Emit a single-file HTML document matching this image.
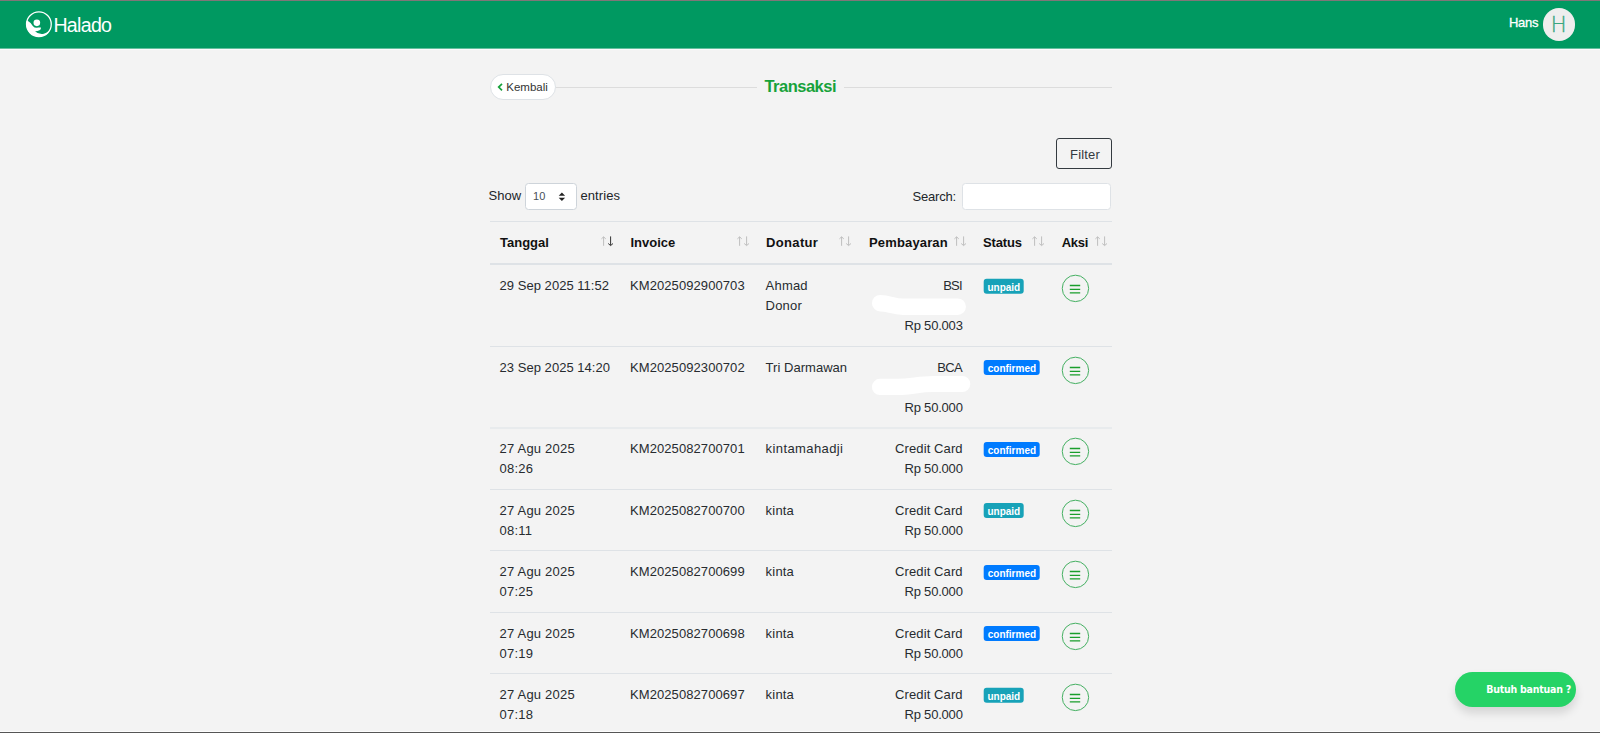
<!DOCTYPE html>
<html lang="id">
<head>
<meta charset="utf-8">
<title>Transaksi</title>
<style>
*{box-sizing:border-box;margin:0;padding:0}
html,body{width:1600px;height:733px;overflow:hidden}
body{position:relative;background:#f3f3f3;font-family:"Liberation Sans",sans-serif;font-size:13px;line-height:20px;color:#212529}
.abs{position:absolute}
#topline{left:0;top:0;width:1600px;height:1px;background:#807678}
#botline{left:0;top:731px;width:1600px;height:2px;background:#555;border-top:1px solid #fdfdfd}
#nav{left:0;top:0;width:1600px;height:48px;background:#009961}
#navedge{left:0;top:48px;width:1600px;height:2px;background:#fcfafc;border-top:1px solid #65c09f}
#brand{left:53.4px;top:12.8px;font-size:19.6px;line-height:24px;color:#fff;letter-spacing:-.7px;white-space:nowrap}
#uname{left:1509px;top:13px;font-size:13px;line-height:20px;color:#fff;letter-spacing:-.3px;-webkit-text-stroke:.3px #fff;white-space:nowrap}
#avatar{left:1542.5px;top:8px;width:32.5px;height:32.5px;border-radius:50%;background:#eee;color:#3aa680;-webkit-text-stroke:.35px #3aa680;padding-top:1px;font-family:"DejaVu Sans Light","DejaVu Sans","Liberation Sans",sans-serif;font-weight:200;font-size:21px;line-height:32.5px;text-align:center}
#back{left:490px;top:74px;width:65.5px;height:25.5px;border:1px solid #dee2e6;border-radius:13px;background:#fff;font-size:11.5px;line-height:23.5px;color:#333;white-space:nowrap}
#back span{position:absolute;left:15.3px;top:0.5px}
#hr1{left:556px;top:87px;width:201px;height:1px;background:#dcdcdc}
#hr2{left:844px;top:87px;width:267.5px;height:1px;background:#dcdcdc}
#title{left:756.5px;top:74px;width:87px;text-align:center;font-weight:bold;font-size:16.5px;letter-spacing:-.5px;line-height:24px;color:#17a23b;white-space:nowrap;padding-left:.5px}
#filter{left:1056px;top:138px;width:55.5px;height:31px;border:1px solid #343a40;border-radius:3px;text-align:center;line-height:31.4px;color:#343a40;padding-left:2.5px;letter-spacing:.15px}
.lbl{white-space:nowrap;line-height:20px}
#sel{left:525.4px;top:183px;width:51.2px;height:27px;border:1px solid #ced4da;border-radius:3.5px;background:#fff;font-size:11px;line-height:25.6px;color:#495057;padding-left:6.7px}
#srch{left:962.4px;top:183px;width:149px;height:27px;border:1px solid #dee2e6;border-radius:3.5px;background:#fff}
#tbl{left:490px;top:0;width:621.5px}
.hl{position:absolute;left:0;width:621.5px;height:1px;background:#dee2e6}
.th{position:absolute;top:232.6px;font-weight:bold;color:#111;white-space:nowrap;line-height:20px}
.td{position:absolute;white-space:nowrap;line-height:20.36px;color:#272b2f}
.r{text-align:right;letter-spacing:.1px}
.rp{letter-spacing:-.2px}
.bk{letter-spacing:-.7px;margin-right:.7px}
.dt{letter-spacing:.2px}
.dl{letter-spacing:.03px}
.iv{letter-spacing:.08px}
.dn{letter-spacing:.25px}
.bdg{position:absolute;height:14.9px;border-radius:3px;color:#fff;font-weight:bold;font-size:10px;line-height:17.4px;text-align:center;white-space:nowrap;overflow:hidden}
.un{background:#17a2b8;width:40.3px}
.co{background:#007bff;width:56.4px}
.act{position:absolute;left:571.7px;width:27.5px;height:27.5px;border:1px solid #4db366;border-radius:50%}
.act i{position:absolute;left:7.2px;width:10.4px;height:1.4px;background:#1a9e2c}
#help{left:1455px;top:671.5px;width:120.5px;height:35.5px;border-radius:18px;background:#25d366;box-shadow:0 6px 10px rgba(0,0,0,.13);color:#fff;font-family:"DejaVu Sans Condensed","Liberation Sans",sans-serif;font-weight:bold;font-size:10.5px;line-height:35.5px;white-space:nowrap}
#help span{position:absolute;left:31.2px;top:.5px;letter-spacing:-.22px}
</style>
</head>
<body>
<div id="nav" class="abs"></div>
<div id="navedge" class="abs"></div>
<div id="topline" class="abs"></div>
<svg class="abs" style="left:0;top:0" width="120" height="49" viewBox="0 0 120 49">
<circle cx="38.9" cy="24.25" r="12.35" fill="none" stroke="#fff" stroke-width="1.3"/>
<circle cx="36.85" cy="22.85" r="3.3" fill="#fff"/>
<path d="M26.99 20.15 Q31 22.5 32.8 26 Q35 28.5 38 27.6 Q40 27.2 41 27.6 Q41.2 29.5 39.5 30.3 Q37 31.5 35 31.3 Q38 34.5 43 34 Q47.5 33 50.76 28.5 A12.6 12.6 0 0 1 26.99 20.15Z" fill="#fff"/>
</svg>
<div id="brand" class="abs">Halado</div>
<div id="uname" class="abs">Hans</div>
<div id="avatar" class="abs">H</div>

<div id="back" class="abs"><svg class="abs" style="left:6px;top:6.5px" width="7" height="10" viewBox="0 0 7 10"><path d="M5 1.9 L1.7 5.1 L5 8.3" fill="none" stroke="#17a23b" stroke-width="1.7"/></svg><span>Kembali</span></div>
<div id="hr1" class="abs"></div>
<div id="title" class="abs">Transaksi</div>
<div id="hr2" class="abs"></div>

<div id="filter" class="abs">Filter</div>

<div class="abs lbl" style="left:488.6px;top:186px">Show</div>
<div id="sel" class="abs">10<svg class="abs" style="left:32px;top:8px" width="8" height="10" viewBox="0 0 8 10"><path d="M0.7 3.7 L3.9 0.5 L7.1 3.7Z M0.7 5.7 L3.9 8.9 L7.1 5.7Z" fill="#222"/></svg></div>
<div class="abs lbl" style="left:580.4px;top:186px;letter-spacing:.1px">entries</div>
<div class="abs lbl" style="left:912.6px;top:186.7px;letter-spacing:-.2px">Search:</div>
<div id="srch" class="abs"></div>

<div id="tbl" class="abs">
<div class="hl" style="top:221px"></div>
<div class="hl" style="top:263px;height:2px"></div>
<div class="th" style="left:10px">Tanggal</div>
<div class="th" style="left:140.5px">Invoice</div>
<div class="th" style="left:276px;letter-spacing:.35px">Donatur</div>
<div class="th" style="left:379px;letter-spacing:.15px">Pembayaran</div>
<div class="th" style="left:493px;letter-spacing:-.15px">Status</div>
<div class="th" style="left:571.7px;letter-spacing:-.25px">Aksi</div>
<!--ROWS-->
<svg class="abs" style="left:110.8px;top:236px" width="13" height="11" viewBox="0 0 13 11"><path d="M2.6 9.8 V1 M0.4 2.9 L2.6 0.8 L4.8 2.9" fill="none" stroke="#bebebe" stroke-width="1"/><path d="M9.6 0.4 V9.2 M7.2 7.5 L9.6 9.6 L12 7.5" fill="none" stroke="#333" stroke-width="1"/></svg>
<svg class="abs" style="left:246.6px;top:236px" width="13" height="11" viewBox="0 0 13 11"><path d="M2.6 9.8 V1 M0.4 2.9 L2.6 0.8 L4.8 2.9" fill="none" stroke="#bebebe" stroke-width="1"/><path d="M9.6 0.4 V9.2 M7.2 7.5 L9.6 9.6 L12 7.5" fill="none" stroke="#bebebe" stroke-width="1"/></svg>
<svg class="abs" style="left:349px;top:236px" width="13" height="11" viewBox="0 0 13 11"><path d="M2.6 9.8 V1 M0.4 2.9 L2.6 0.8 L4.8 2.9" fill="none" stroke="#bebebe" stroke-width="1"/><path d="M9.6 0.4 V9.2 M7.2 7.5 L9.6 9.6 L12 7.5" fill="none" stroke="#bebebe" stroke-width="1"/></svg>
<svg class="abs" style="left:464.2px;top:236px" width="13" height="11" viewBox="0 0 13 11"><path d="M2.6 9.8 V1 M0.4 2.9 L2.6 0.8 L4.8 2.9" fill="none" stroke="#bebebe" stroke-width="1"/><path d="M9.6 0.4 V9.2 M7.2 7.5 L9.6 9.6 L12 7.5" fill="none" stroke="#bebebe" stroke-width="1"/></svg>
<svg class="abs" style="left:542px;top:236px" width="13" height="11" viewBox="0 0 13 11"><path d="M2.6 9.8 V1 M0.4 2.9 L2.6 0.8 L4.8 2.9" fill="none" stroke="#bebebe" stroke-width="1"/><path d="M9.6 0.4 V9.2 M7.2 7.5 L9.6 9.6 L12 7.5" fill="none" stroke="#bebebe" stroke-width="1"/></svg>
<svg class="abs" style="left:605.1px;top:236px" width="13" height="11" viewBox="0 0 13 11"><path d="M2.6 9.8 V1 M0.4 2.9 L2.6 0.8 L4.8 2.9" fill="none" stroke="#bebebe" stroke-width="1"/><path d="M9.6 0.4 V9.2 M7.2 7.5 L9.6 9.6 L12 7.5" fill="none" stroke="#bebebe" stroke-width="1"/></svg>
<div class="td dl" style="left:9.6px;top:275.6px">29 Sep 2025 11:52</div>
<div class="td iv" style="left:140px;top:275.6px">KM2025092900703</div>
<div class="td" style="left:275.6px;top:275.6px;letter-spacing:.2px">Ahmad<br>Donor</div>
<div class="td r" style="left:369px;width:103.7px;top:275.6px"><span class="bk">BSI</span><br>&nbsp;<br><span class="rp">Rp 50.003</span></div>
<div class="bdg un" style="left:493px;top:278px;transform:translate(.7px,0.75px)">unpaid</div>
<svg class="abs" style="left:571px;top:274px" width="29" height="29" viewBox="0 0 29 29"><circle cx="14.45" cy="14.4" r="13.2" fill="none" stroke="#45b062" stroke-width="1"/><path d="M8.8 11.5 H19.2 M8.8 15.3 H19.2 M8.8 18.8 H19.2" stroke="#1a9e2c" stroke-width="1.35" fill="none"/></svg>
<div class="hl" style="top:346px"></div>
<div class="td dl" style="left:9.6px;top:357.6px">23 Sep 2025 14:20</div>
<div class="td iv" style="left:140px;top:357.6px">KM2025092300702</div>
<div class="td" style="left:275.6px;top:357.6px;letter-spacing:.03px">Tri Darmawan</div>
<div class="td r" style="left:369px;width:103.7px;top:357.6px"><span class="bk">BCA</span><br>&nbsp;<br><span class="rp">Rp 50.000</span></div>
<div class="bdg co" style="left:493px;top:360px;transform:translate(.7px,0.10px)">confirmed</div>
<svg class="abs" style="left:571px;top:356px" width="29" height="29" viewBox="0 0 29 29"><circle cx="14.45" cy="14.4" r="13.2" fill="none" stroke="#45b062" stroke-width="1"/><path d="M8.8 11.5 H19.2 M8.8 15.3 H19.2 M8.8 18.8 H19.2" stroke="#1a9e2c" stroke-width="1.35" fill="none"/></svg>
<div class="hl" style="top:427px;height:2px;background:#e8ebed"></div>
<div class="td dt" style="left:9.6px;top:439px">27 Agu 2025<br>08:26</div>
<div class="td iv" style="left:140px;top:439px">KM2025082700701</div>
<div class="td" style="left:275.6px;top:439px;letter-spacing:.4px">kintamahadji</div>
<div class="td r" style="left:369px;width:103.7px;top:439px">Credit Card<br><span class="rp">Rp 50.000</span></div>
<div class="bdg co" style="left:493px;top:441px;transform:translate(.7px,0.90px)">confirmed</div>
<svg class="abs" style="left:571px;top:437.4px" width="29" height="29" viewBox="0 0 29 29"><circle cx="14.45" cy="14.4" r="13.2" fill="none" stroke="#45b062" stroke-width="1"/><path d="M8.8 11.5 H19.2 M8.8 15.3 H19.2 M8.8 18.8 H19.2" stroke="#1a9e2c" stroke-width="1.35" fill="none"/></svg>
<div class="hl" style="top:489px"></div>
<div class="td dt" style="left:9.6px;top:500.6px">27 Agu 2025<br>08:11</div>
<div class="td iv" style="left:140px;top:500.6px">KM2025082700700</div>
<div class="td" style="left:275.6px;top:500.6px;letter-spacing:.2px">kinta</div>
<div class="td r" style="left:369px;width:103.7px;top:500.6px">Credit Card<br><span class="rp">Rp 50.000</span></div>
<div class="bdg un" style="left:493px;top:503px;transform:translate(.7px,0.05px)">unpaid</div>
<svg class="abs" style="left:571px;top:499px" width="29" height="29" viewBox="0 0 29 29"><circle cx="14.45" cy="14.4" r="13.2" fill="none" stroke="#45b062" stroke-width="1"/><path d="M8.8 11.5 H19.2 M8.8 15.3 H19.2 M8.8 18.8 H19.2" stroke="#1a9e2c" stroke-width="1.35" fill="none"/></svg>
<div class="hl" style="top:550px"></div>
<div class="td dt" style="left:9.6px;top:561.6px">27 Agu 2025<br>07:25</div>
<div class="td iv" style="left:140px;top:561.6px">KM2025082700699</div>
<div class="td" style="left:275.6px;top:561.6px;letter-spacing:.2px">kinta</div>
<div class="td r" style="left:369px;width:103.7px;top:561.6px">Credit Card<br><span class="rp">Rp 50.000</span></div>
<div class="bdg co" style="left:493px;top:564px;transform:translate(.7px,0.90px)">confirmed</div>
<svg class="abs" style="left:571px;top:560px" width="29" height="29" viewBox="0 0 29 29"><circle cx="14.45" cy="14.4" r="13.2" fill="none" stroke="#45b062" stroke-width="1"/><path d="M8.8 11.5 H19.2 M8.8 15.3 H19.2 M8.8 18.8 H19.2" stroke="#1a9e2c" stroke-width="1.35" fill="none"/></svg>
<div class="hl" style="top:612px"></div>
<div class="td dt" style="left:9.6px;top:623.6px">27 Agu 2025<br>07:19</div>
<div class="td iv" style="left:140px;top:623.6px">KM2025082700698</div>
<div class="td" style="left:275.6px;top:623.6px;letter-spacing:.2px">kinta</div>
<div class="td r" style="left:369px;width:103.7px;top:623.6px">Credit Card<br><span class="rp">Rp 50.000</span></div>
<div class="bdg co" style="left:493px;top:625px;transform:translate(.7px,0.95px)">confirmed</div>
<svg class="abs" style="left:571px;top:622px" width="29" height="29" viewBox="0 0 29 29"><circle cx="14.45" cy="14.4" r="13.2" fill="none" stroke="#45b062" stroke-width="1"/><path d="M8.8 11.5 H19.2 M8.8 15.3 H19.2 M8.8 18.8 H19.2" stroke="#1a9e2c" stroke-width="1.35" fill="none"/></svg>
<div class="hl" style="top:673px"></div>
<div class="td dt" style="left:9.6px;top:684.6px">27 Agu 2025<br>07:18</div>
<div class="td iv" style="left:140px;top:684.6px">KM2025082700697</div>
<div class="td" style="left:275.6px;top:684.6px;letter-spacing:.2px">kinta</div>
<div class="td r" style="left:369px;width:103.7px;top:684.6px">Credit Card<br><span class="rp">Rp 50.000</span></div>
<div class="bdg un" style="left:493px;top:687px;transform:translate(.7px,0.70px)">unpaid</div>
<svg class="abs" style="left:571px;top:683px" width="29" height="29" viewBox="0 0 29 29"><circle cx="14.45" cy="14.4" r="13.2" fill="none" stroke="#45b062" stroke-width="1"/><path d="M8.8 11.5 H19.2 M8.8 15.3 H19.2 M8.8 18.8 H19.2" stroke="#1a9e2c" stroke-width="1.35" fill="none"/></svg>
<svg class="abs" style="left:370px;top:290px" width="120" height="30" viewBox="860 290 120 30"><path d="M880.2 303.2 C889 303.2 893 306.7 903 306.7 L957.7 306.7" fill="none" stroke="#fff" stroke-width="16.5" stroke-linecap="round" stroke-linejoin="round"/></svg>
<svg class="abs" style="left:370px;top:370px" width="120" height="30" viewBox="860 370 120 30"><path d="M880 386.9 L897 386.9 C912 386.9 918 384 933 384 L962.2 384" fill="none" stroke="#fff" stroke-width="16.2" stroke-linecap="round" stroke-linejoin="round"/></svg>
<!--/ROWS-->
</div>

<div id="help" class="abs"><span>Butuh bantuan ?</span></div>
<div id="botline" class="abs"></div>
</body>
</html>
